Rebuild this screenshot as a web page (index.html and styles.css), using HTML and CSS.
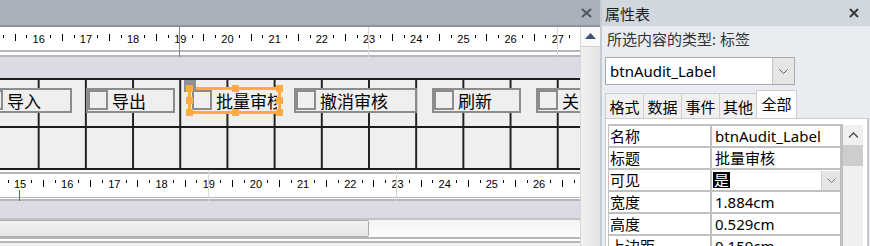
FILE: index.html
```html
<!DOCTYPE html>
<html lang="zh-CN">
<head>
    <meta charset="UTF-8">
    <title>窗体设计 - 属性表</title>
    <link rel="stylesheet" href="styles.css">
</head>
<body>
<div class="app">
    <div class="doc">
        <div class="doc-head">
            <svg class="close" width="11" height="10" viewBox="0 0 11 10"><path d="M1 1 L10 9 M10 1 L1 9" stroke="#4f5662" stroke-width="2"/></svg>
        </div>
        <div class="doc-body">
            <div class="designer">
                <div class="ruler ruler-top">
                    <div class="cm"><b>15</b><i></i><i class="half"></i><i></i></div>
                    <div class="cm"><b>16</b><i></i><i class="half"></i><i></i></div>
                    <div class="cm"><b>17</b><i></i><i class="half"></i><i></i></div>
                    <div class="cm"><b>18</b><i></i><i class="half"></i><i></i></div>
                    <div class="cm"><b>19</b><i></i><i class="half"></i><i></i></div>
                    <div class="cm"><b>20</b><i></i><i class="half"></i><i></i></div>
                    <div class="cm"><b>21</b><i></i><i class="half"></i><i></i></div>
                    <div class="cm"><b>22</b><i></i><i class="half"></i><i></i></div>
                    <div class="cm"><b>23</b><i></i><i class="half"></i><i></i></div>
                    <div class="cm"><b>24</b><i></i><i class="half"></i><i></i></div>
                    <div class="cm"><b>25</b><i></i><i class="half"></i><i></i></div>
                    <div class="cm"><b>26</b><i></i><i class="half"></i><i></i></div>
                    <div class="cm"><b>27</b><i></i><i class="half"></i><i></i></div>
                </div>
                <div class="edge edge-top"></div>
                <div class="band"></div>

                <div class="canvas">
                    <div class="grid-row first"></div>
                    <div class="grid-row second"></div>

                    <div class="ctl" style="left:-19px;width:91px"><span class="chk"></span><span class="cap">导入</span></div>
                    <div class="ctl" style="left:86px;width:89px"><span class="chk"></span><span class="cap">导出</span></div>
                    <div class="ctl selected" style="left:188px;width:93px">
                        <span class="chk"></span><span class="cap">批量审核</span>
                        <span class="grip"></span>
                        <span class="hd tl"></span><span class="hd tm"></span><span class="hd tr"></span>
                        <span class="hd ml"></span><span class="hd mr"></span>
                        <span class="hd bl"></span><span class="hd bm"></span><span class="hd br"></span>
                    </div>
                    <div class="ctl" style="left:294px;width:123px"><span class="chk"></span><span class="cap">撤消审核</span></div>
                    <div class="ctl" style="left:432px;width:89px"><span class="chk"></span><span class="cap">刷新</span></div>
                    <div class="ctl" style="left:536px;width:89px"><span class="chk"></span><span class="cap">关闭</span></div>
                </div>

                <div class="edge edge-mid"></div>
                <div class="ruler ruler-bottom">
                    <div class="cm"><b>14</b><i></i><i class="half"></i><i></i></div>
                    <div class="cm"><b>15</b><i></i><i class="half"></i><i></i></div>
                    <div class="cm"><b>16</b><i></i><i class="half"></i><i></i></div>
                    <div class="cm"><b>17</b><i></i><i class="half"></i><i></i></div>
                    <div class="cm"><b>18</b><i></i><i class="half"></i><i></i></div>
                    <div class="cm"><b>19</b><i></i><i class="half"></i><i></i></div>
                    <div class="cm"><b>20</b><i></i><i class="half"></i><i></i></div>
                    <div class="cm"><b>21</b><i></i><i class="half"></i><i></i></div>
                    <div class="cm"><b>22</b><i></i><i class="half"></i><i></i></div>
                    <div class="cm"><b>23</b><i></i><i class="half"></i><i></i></div>
                    <div class="cm"><b>24</b><i></i><i class="half"></i><i></i></div>
                    <div class="cm"><b>25</b><i></i><i class="half"></i><i></i></div>
                    <div class="cm"><b>26</b><i></i><i class="half"></i><i></i></div>
                </div>
                <div class="edge edge-low"></div>
                <div class="band small"></div>
                <div class="hscroll"><div class="hthumb"></div></div>
                <div class="foot"></div>

                <span class="marker cursor"></span>
                <span class="marker light" style="left:368px"></span>
                <span class="marker light" style="left:557px"></span>
                <span class="marker light low" style="left:208px"></span>
                <span class="marker light low" style="left:396px"></span>
                <span class="marker blue"></span>
            </div>
            <div class="vscroll">
                <div class="vbtn"><svg width="11" height="6" viewBox="0 0 11 6"><path d="M0 6 L5.5 0 L11 6 Z" fill="#3f5275"/></svg></div>
            </div>
        </div>
    </div>

    <div class="props">
        <div class="props-head">
            <span>属性表</span>
            <svg width="10" height="10" viewBox="0 0 10 10"><path d="M1 1 L9 9 M9 1 L1 9" stroke="#3a3a3a" stroke-width="2"/></svg>
        </div>
        <div class="props-body">
            <div class="sel-type">所选内容的类型: 标签</div>
            <div class="combo">
                <span>btnAudit_Label</span>
                <span class="combo-btn"><svg width="9" height="5" viewBox="0 0 9 5"><path d="M0.5 0.5 L4.5 4.5 L8.5 0.5" fill="none" stroke="#555" stroke-width="1"/></svg></span>
            </div>
            <div class="tabs">
                <span class="tab">格式</span>
                <span class="tab">数据</span>
                <span class="tab">事件</span>
                <span class="tab">其他</span>
                <span class="tab active">全部</span>
            </div>
            <div class="sheet">
                <div class="table">
                    <div class="cell">名称</div><div class="cell val">btnAudit_Label</div>
                    <div class="cell">标题</div><div class="cell val">批量审核</div>
                    <div class="cell">可见</div>
                    <div class="cell val pick"><span class="hl">是</span><span class="cell-btn"><svg width="9" height="5" viewBox="0 0 9 5"><path d="M0.5 0.5 L4.5 4.5 L8.5 0.5" fill="none" stroke="#777" stroke-width="1"/></svg></span></div>
                    <div class="cell">宽度</div><div class="cell val">1.884cm</div>
                    <div class="cell">高度</div><div class="cell val">0.529cm</div>
                    <div class="cell">上边距</div><div class="cell val">0.159cm</div>
                </div>
                <div class="sbar">
                    <div class="sbar-btn"><svg width="11" height="6" viewBox="0 0 11 6"><path d="M1 5.5 L5.5 1 L10 5.5" fill="none" stroke="#555" stroke-width="1.5"/></svg></div>
                    <div class="sbar-thumb"></div>
                </div>
            </div>
        </div>
    </div>
</div>
</body>
</html>
```

FILE: styles.css
```css
* {
    box-sizing: border-box;
}

body {
    margin: 0;
    width: 870px;
    height: 246px;
    overflow: hidden;
    font-family: "Noto Sans", "Noto Sans CJK SC", sans-serif;
    background: #ffffff;
}

.app {
    display: flex;
    height: 246px;
}

/* ---------- form designer ---------- */

.doc {
    width: 600px;
    flex: none;
    display: flex;
    flex-direction: column;
}

.doc-head {
    height: 27px;
    background: #abb1bb;
    border-bottom: 2px solid #8d939c;
    display: flex;
    justify-content: flex-end;
    align-items: center;
    padding-right: 8px;
}

.doc-body {
    flex: 1;
    display: flex;
    min-height: 0;
}

.designer {
    position: relative;
    width: 580px;
    flex: none;
    overflow: hidden;
    display: flex;
    flex-direction: column;
}

.ruler {
    display: flex;
    background: #ffffff;
    flex: none;
}

.ruler-top {
    height: 23px;
    margin-left: -14.4px;
}

.ruler-bottom {
    height: 21px;
    margin-left: -33.1px;
}

.cm {
    display: flex;
    width: 47.2px;
    flex: none;
}

.cm b,
.cm i {
    width: 11.8px;
    flex: none;
    display: flex;
    justify-content: center;
    align-items: flex-start;
}

.cm b {
    font-family: "Liberation Sans", sans-serif;
    font-weight: normal;
    font-size: 11px;
    line-height: 13px;
    color: #000000;
    margin-top: 6px;
}

.cm i::before {
    content: "";
    width: 1px;
    height: 3px;
    background: #000000;
    margin-top: 8px;
}

.cm i.half::before {
    height: 7px;
    margin-top: 7px;
}

.ruler-bottom .cm b {
    margin-top: 4px;
}

.ruler-bottom .cm i::before {
    margin-top: 6px;
}

.edge {
    flex: none;
    background: #ffffff;
}

.edge-top {
    height: 7px;
    border-top: 2px solid #b6b6b6;
    border-bottom: 2px solid #b6b6b6;
}

.edge-mid {
    height: 4px;
    border-bottom: 2px solid #b6b6b6;
}

.edge-low {
    height: 6px;
    background: linear-gradient(#ffffff 0 2px, #b6b6b6 2px 3px, #ffffff 3px 4px, #b6b6b6 4px 6px);
}

.band {
    height: 21px;
    flex: none;
    background: #dcdae4;
}

.band.small {
    height: 17px;
}

.canvas {
    position: relative;
    height: 92px;
    flex: none;
    background-color: #efefef;
    background-image: linear-gradient(to right, #222222 0 2px, transparent 2px);
    background-size: 47.2px 100%;
    background-position: 37.7px 0;
    border-top: 2px solid #1e1e1e;
    border-bottom: 2px solid #1e1e1e;
}

.grid-row.first {
    height: 46px;
}

.grid-row.second {
    height: 42px;
    border-top: 2px solid #1e1e1e;
}

.ctl {
    position: absolute;
    top: 8px;
    height: 25px;
    border: 2px solid #8c8c8c;
    background: #efefef;
    display: flex;
    align-items: center;
    overflow: hidden;
    white-space: nowrap;
}

.chk {
    width: 20px;
    height: 20px;
    flex: none;
    align-self: flex-start;
    border: 2px solid #8c8c8c;
}

.cap {
    margin-left: 4px;
    font-family: "Noto Sans CJK SC", sans-serif;
    font-size: 17px;
    line-height: 21px;
    color: #000000;
}

.ctl.selected {
    top: 7px;
    height: 27px;
    border: 3px solid #ffab45;
    overflow: visible;
}

.ctl.selected .chk {
    margin-left: 1px;
}

.ctl.selected .cap {
    width: 61px;
    overflow: hidden;
}

.grip {
    position: absolute;
    left: -7px;
    top: -10px;
    width: 12px;
    height: 12px;
    background: #8f9196;
}

.hd {
    position: absolute;
    width: 7px;
    height: 7px;
    background: #ffab45;
}

.hd.tl, .hd.tm, .hd.tr { top: -5px; }
.hd.bl, .hd.bm, .hd.br { bottom: -5px; }
.hd.ml, .hd.mr { top: 7px; }
.hd.tl, .hd.ml, .hd.bl { left: -5px; }
.hd.tr, .hd.mr, .hd.br { right: -5px; }
.hd.tm, .hd.bm { left: 41px; }

.hscroll {
    height: 19px;
    flex: none;
    border-top: 2px solid #c4c4c4;
    background: linear-gradient(#f4f4f4, #fdfdfd);
}

.hthumb {
    width: 369px;
    height: 17px;
    border: 1px solid #acacac;
    border-left: none;
    border-radius: 0 2px 2px 0;
    background: linear-gradient(#f3f3f3, #e5e5e5);
}

.foot {
    height: 9px;
    flex: none;
    background: linear-gradient(#b6b6b6 0 2px, #ffffff 2px 4px, #b6b6b6 4px 6px, #f2f2f2 6px);
}

.marker {
    position: absolute;
    width: 1px;
}

.marker.cursor {
    left: 179px;
    top: 0;
    height: 30px;
    background: #7f8590;
}

.marker.light {
    top: 0;
    height: 30px;
    background: #d9d9d9;
}

.marker.light.low {
    top: 143px;
    height: 31px;
}

.marker.blue {
    left: 19px;
    top: 163px;
    height: 11px;
    background: #3d6fb6;
}

.vscroll {
    width: 20px;
    flex: none;
    background: linear-gradient(to right, #f1f1f1, #e4e4e4);
    border-left: 1px solid #d6d6d6;
}

.vbtn {
    height: 20px;
    display: flex;
    justify-content: center;
    align-items: center;
    background: #f9f9f9;
    border-bottom: 1px solid #d0d0d0;
    padding-bottom: 1px;
}

/* ---------- property sheet ---------- */

.props {
    flex: 1;
    display: flex;
    flex-direction: column;
    border-left: 2px solid #c6cbd2;
    background: #e9ecf0;
}

.props-head {
    height: 26px;
    flex: none;
    background: #d1d7df;
    display: flex;
    align-items: center;
    justify-content: space-between;
    padding: 0 11px 0 3px;
    font-size: 15px;
    color: #1e1e1e;
}

.props-body {
    flex: 1;
    padding-left: 3px;
    display: flex;
    flex-direction: column;
    min-height: 0;
}

.sel-type {
    height: 31px;
    line-height: 26px;
    padding-left: 2px;
    font-size: 15px;
    color: #333333;
}

.combo {
    width: 190px;
    height: 28px;
    flex: none;
    background: #ffffff;
    border: 1px solid #a9a9a9;
    display: flex;
    align-items: center;
    justify-content: space-between;
    padding-left: 4px;
    font-size: 15px;
    color: #000000;
}

.combo-btn {
    width: 22px;
    height: 26px;
    display: flex;
    justify-content: center;
    align-items: center;
    background: #e6e6e6;
    border-left: 1px solid #c6c6c6;
}

.tabs {
    display: flex;
    align-items: flex-end;
    height: 28px;
    margin-top: 5px;
    flex: none;
}

.tab {
    height: 25px;
    width: 38px;
    display: flex;
    justify-content: center;
    align-items: center;
    background: #f0f0f0;
    border: 1px solid #cdcdcd;
    border-bottom: none;
    border-right: none;
    font-size: 15px;
    color: #000000;
}

.tab:nth-child(4) {
    width: 37px;
}

.tab.active {
    width: 41px;
    height: 28px;
    background: #ffffff;
    border-right: 1px solid #cdcdcd;
    padding-bottom: 2px;
}

.sheet {
    flex: 1;
    display: flex;
    align-items: flex-start;
    background: #ffffff;
    border-top: 1px solid #cdcdcd;
    border-left: 1px solid #cdcdcd;
    border-right: 2px solid #c8c8c8;
    padding: 5px 0 0 2px;
    margin-right: 1px;
    overflow: hidden;
}

.table {
    display: grid;
    grid-template-columns: 101px 128px;
    grid-auto-rows: 20px;
    gap: 2px;
    padding: 2px 3px 0 1px;
    background: #c0c0c0;
    flex: none;
}

.cell {
    background: #ffffff;
    padding-left: 1px;
    font-size: 15px;
    line-height: 20px;
    color: #000000;
    white-space: nowrap;
    overflow: hidden;
}

.cell.val {
    padding-left: 3px;
}

.cell.pick {
    display: flex;
    justify-content: space-between;
    align-items: center;
    padding-left: 1px;
}

.hl {
    background: #000000;
    color: #ffffff;
    line-height: 16px;
    padding: 0 1px;
}

.cell-btn {
    width: 19px;
    height: 19px;
    display: flex;
    justify-content: center;
    align-items: center;
    background: #e5e5e5;
    border-left: 1px solid #d0d0d0;
}

.sbar {
    width: 20px;
    height: 130px;
    margin-top: 1px;
    flex: none;
    background: #f0f0f0;
}

.sbar-btn {
    height: 20px;
    display: flex;
    justify-content: center;
    align-items: center;
}

.sbar-thumb {
    height: 21px;
    background: #cdcdcd;
}
```
